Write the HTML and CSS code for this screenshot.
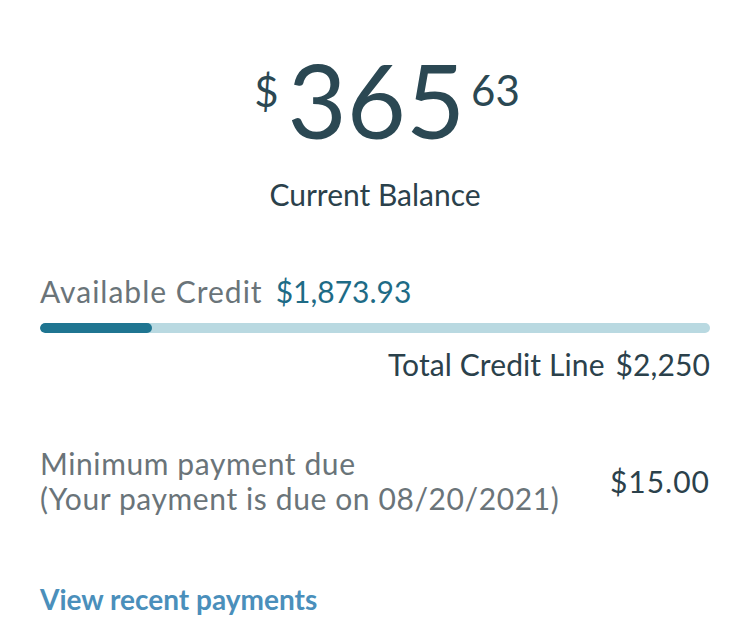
FILE: index.html
```html
<!DOCTYPE html>
<html>
<head>
<meta charset="utf-8">
<link rel="stylesheet" href="styles.css">
</head>
<body>
<main class="card">
  <section class="balance">
    <div class="amount">
      <span class="cur">$</span><span class="whole">365</span><span class="cents">63</span>
    </div>
    <div class="label">Current Balance</div>
  </section>

  <section class="credit">
    <div class="avail">
      <span class="avail-label">Available Credit</span>
      <span class="avail-value">$1,873.93</span>
    </div>
    <div class="track"><div class="fill" style="width:16.7%"></div></div>
    <div class="total">
      <span>Total Credit Line</span>
      <span>$2,250</span>
    </div>
  </section>

  <section class="minimum">
    <div class="min-text">
      <div>Minimum payment due</div>
      <div>(Your payment is due on 08/20/2021)</div>
    </div>
    <div class="min-value">$15.00</div>
  </section>

  <a class="link" href="#">View recent payments</a>
</main>
</body>
</html>
```
FILE: styles.css
```css
html, body {
  margin: 0;
  padding: 0;
  background: #ffffff;
}
body {
  font-family: Lato, "Open Sans", sans-serif;
  color: #2b414b;
}
.card {
  padding: 0 40px 0 40px;
  display: flex;
  flex-direction: column;
}
.balance {
  display: flex;
  flex-direction: column;
  align-items: center;
  padding-top: 49px;
}
.amount {
  display: flex;
  align-items: flex-start;
  line-height: 1;
  color: #2b4853;
  margin-left: 24px;
}
.cur {
  font-size: 42px;
  margin-top: 21px;
  margin-right: 9px;
}
.whole {
  font-size: 102px;
}
.cents {
  font-size: 42px;
  margin-top: 20px;
  margin-left: 6px;
}
.label {
  font-size: 30px;
  margin-top: 25px;
  color: #2b414b;
}
.credit {
  margin-top: 62px;
  display: flex;
  flex-direction: column;
}
.avail {
  display: flex;
  gap: 13px;
  font-size: 30px;
  line-height: 34px;
}
.avail-label { color: #6a7479; letter-spacing: 1px; }
.avail-value { color: #1e6b86; }
.track {
  margin-top: 15px;
  height: 10px;
  border-radius: 5px;
  background: #b9d9e1;
  overflow: hidden;
}
.fill {
  height: 100%;
  border-radius: 5px;
  background: #1f7591;
}
.total {
  display: flex;
  justify-content: flex-end;
  gap: 11px;
  font-size: 30px;
  line-height: 34px;
  letter-spacing: 0.1px;
  margin-top: 14px;
  color: #2b414b;
}
.minimum {
  margin-top: 65px;
  display: flex;
  align-items: center;
  justify-content: space-between;
}
.min-text {
  font-size: 30px;
  line-height: 35px;
  letter-spacing: 0.6px;
  color: #6a7479;
}
.min-value {
  font-size: 30px;
  letter-spacing: 1px;
  color: #2b414b;
}
.link {
  margin-top: 66px;
  font-size: 28px;
  font-weight: 700;
  color: #4a8fbb;
  text-decoration: none;
}
```
